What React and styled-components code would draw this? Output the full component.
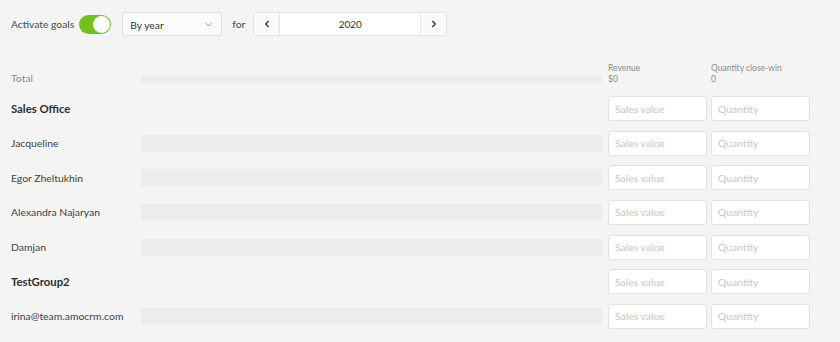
import React from "react";
import styled, { createGlobalStyle } from "styled-components";

const GlobalStyle = createGlobalStyle`
  html, body {
    margin: 0;
    padding: 0;
    background: #f4f4f4;
  }
  body {
    font-family: "Lato", "Roboto", sans-serif;
    color: #313942;
  }
`;

const Page = styled.div`
  width: 840px;
  height: 342px;
  overflow: hidden;
  padding: 12px 11px 0;
  box-sizing: border-box;
`;

const Toolbar = styled.div`
  display: flex;
  align-items: center;
  height: 24px;
`;

const ToolLabel = styled.span`
  font-size: 10.3px;
  color: #4a4a4a;
  margin-right: ${(p) => p.gap || 0}px;
`;

const Toggle = styled.div`
  width: 32px;
  height: 19px;
  border-radius: 10px;
  background: #74c020;
  position: relative;
  margin-right: 11px;
  &::after {
    content: "";
    position: absolute;
    right: 1px;
    top: 1px;
    width: 17px;
    height: 17px;
    border-radius: 50%;
    background: #fff;
  }
`;

const Select = styled.div`
  width: 100px;
  height: 24px;
  box-sizing: border-box;
  border: 1px solid #dcdcdc;
  border-radius: 2px;
  background: #fbfbfb;
  display: flex;
  align-items: center;
  justify-content: space-between;
  padding: 1px 8px 0 7px;
  font-size: 10.3px;
  color: #333;
  margin-right: 10px;
  svg {
    width: 9px;
    height: 9px;
  }
`;

const Stepper = styled.div`
  display: flex;
  height: 24px;
  width: 194px;
  box-sizing: border-box;
  border: 1px solid #e4e4e4;
  border-radius: 2px;
  background: #fff;
`;

const StepButton = styled.div`
  width: 25px;
  display: flex;
  align-items: center;
  justify-content: center;
  background: #fafafa;
  border-${(p) => (p.side === "left" ? "right" : "left")}: 1px solid #e4e4e4;
  svg {
    width: 8px;
    height: 8px;
  }
`;

const Year = styled.div`
  flex: 1;
  display: flex;
  align-items: center;
  justify-content: center;
  font-size: 10px;
  color: #333;
`;

const Table = styled.div`
  margin-top: 24px;
  display: flex;
  flex-direction: column;
`;

const Row = styled.div`
  display: grid;
  grid-template-columns: 130px 461px 105px 103px;
  align-items: ${(p) => (p.top ? "start" : "center")};
  height: ${(p) => p.h || 34.67}px;
`;

const Name = styled.div`
  font-size: ${(p) => (p.bold ? 11.3 : 10.4)}px;
  font-weight: ${(p) => (p.bold ? 700 : 400)};
  color: ${(p) => (p.muted ? "#8a8a8a" : p.bold ? "#2b2f33" : "#3d4247")};
  white-space: nowrap;
  line-height: 14px;
  padding-top: ${(p) => (p.muted ? 11 : 0)}px;
`;

const Bar = styled.div`
  height: ${(p) => p.h}px;
  background: #ececec;
  margin-top: ${(p) => p.offset || 0}px;
`;

const Header = styled.div`
  justify-self: end;
  width: 99px;
  font-size: 8.5px;
  color: #8c8c8c;
  line-height: 11px;
  padding-top: 2.5px;
`;

const Input = styled.input`
  justify-self: end;
  width: 99px;
  height: 25px;
  box-sizing: border-box;
  border: 1px solid #e2e2e2;
  border-radius: 3px;
  background: #fff;
  font-family: inherit;
  font-size: 10.4px;
  padding: 0 6px;
  outline: none;
  &::placeholder {
    color: #c6c6c6;
  }
`;

const Spacer = styled.div``;

const people = [
  { name: "Sales Office", group: true },
  { name: "Jacqueline" },
  { name: "Egor Zheltukhin" },
  { name: "Alexandra Najaryan" },
  { name: "Damjan" },
  { name: "TestGroup2", group: true },
  { name: "irina@team.amocrm.com" },
];

const Chevron = ({ dir }) => {
  const d = {
    down: "M2 4l4 4 4-4",
    left: "M8 2L4 6l4 4",
    right: "M4 2l4 4-4 4",
  }[dir];
  return (
    <svg
      viewBox="0 0 12 12"
      fill="none"
      stroke={dir === "down" ? "#888" : "#333"}
      strokeWidth={dir === "down" ? 1.2 : 2}
      strokeLinecap="round"
      strokeLinejoin="round"
    >
      <path d={d} />
    </svg>
  );
};

export default function App() {
  return (
    <Page>
      <GlobalStyle />
      <Toolbar>
        <ToolLabel gap={5}>Activate goals</ToolLabel>
        <Toggle />
        <Select>
          <span>By year</span>
          <Chevron dir="down" />
        </Select>
        <ToolLabel gap={8}>for</ToolLabel>
        <Stepper>
          <StepButton side="left">
            <Chevron dir="left" />
          </StepButton>
          <Year>2020</Year>
          <StepButton side="right">
            <Chevron dir="right" />
          </StepButton>
        </Stepper>
      </Toolbar>
      <Table>
        <Row h={31.2} top>
          <Name muted>Total</Name>
          <Bar h={8} offset={15} />
          <Header>
            Revenue
            <br />
            $0
          </Header>
          <Header>
            Quantity close-win
            <br />0
          </Header>
        </Row>
        {people.map((p) => (
          <Row key={p.name}>
            <Name bold={p.group}>{p.name}</Name>
            {p.group ? <Spacer /> : <Bar h={17} />}
            <Input placeholder="Sales value" />
            <Input placeholder="Quantity" />
          </Row>
        ))}
      </Table>
    </Page>
  );
}
